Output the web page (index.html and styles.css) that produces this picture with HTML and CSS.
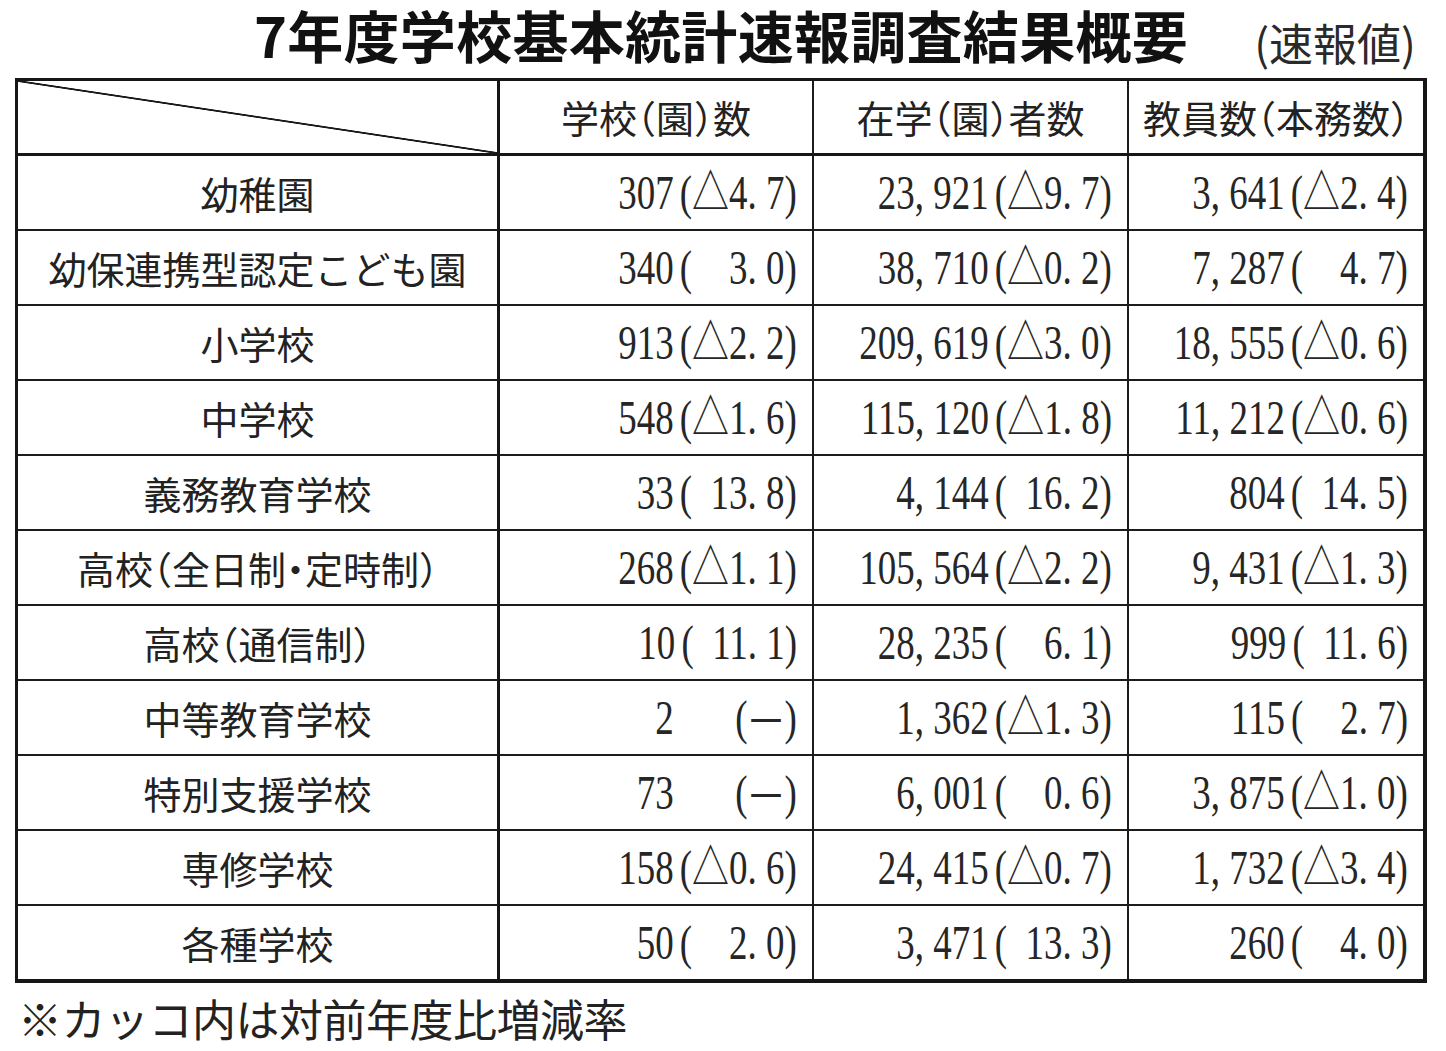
FILE: index.html
```html
<!DOCTYPE html>
<html lang="ja">
<head>
<meta charset="utf-8">
<title>7年度学校基本統計速報調査結果概要</title>
<link rel="stylesheet" href="styles.css">
</head>
<body>
<div class="page">
  <header class="head">
    <h1 class="title">7年度学校基本統計速報調査結果概要</h1>
    <div class="note">(速報値)</div>
  </header>

  <div class="tbl">
    <div class="hd diag"></div>
    <div class="hd">学校（園）数</div>
    <div class="hd">在学（園）者数</div>
    <div class="hd">教員数（本務数）</div>

    <div class="lbl">幼稚園</div>
    <div class="num"><span class="n">307<span class="o">(</span><span class="t">△</span>4<span class="d">.</span>7<span class="e">)</span></span></div>
    <div class="num"><span class="n">23<span class="c">,</span>921<span class="o">(</span><span class="t">△</span>9<span class="d">.</span>7<span class="e">)</span></span></div>
    <div class="num"><span class="n">3<span class="c">,</span>641<span class="o">(</span><span class="t">△</span>2<span class="d">.</span>4<span class="e">)</span></span></div>

    <div class="lbl">幼保連携型認定こども園</div>
    <div class="num"><span class="n">340<span class="o">(</span><span class="b2"></span>3<span class="d">.</span>0<span class="e">)</span></span></div>
    <div class="num"><span class="n">38<span class="c">,</span>710<span class="o">(</span><span class="t">△</span>0<span class="d">.</span>2<span class="e">)</span></span></div>
    <div class="num"><span class="n">7<span class="c">,</span>287<span class="o">(</span><span class="b2"></span>4<span class="d">.</span>7<span class="e">)</span></span></div>

    <div class="lbl">小学校</div>
    <div class="num"><span class="n">913<span class="o">(</span><span class="t">△</span>2<span class="d">.</span>2<span class="e">)</span></span></div>
    <div class="num"><span class="n">209<span class="c">,</span>619<span class="o">(</span><span class="t">△</span>3<span class="d">.</span>0<span class="e">)</span></span></div>
    <div class="num"><span class="n">18<span class="c">,</span>555<span class="o">(</span><span class="t">△</span>0<span class="d">.</span>6<span class="e">)</span></span></div>

    <div class="lbl">中学校</div>
    <div class="num"><span class="n">548<span class="o">(</span><span class="t">△</span>1<span class="d">.</span>6<span class="e">)</span></span></div>
    <div class="num"><span class="n">115<span class="c">,</span>120<span class="o">(</span><span class="t">△</span>1<span class="d">.</span>8<span class="e">)</span></span></div>
    <div class="num"><span class="n">11<span class="c">,</span>212<span class="o">(</span><span class="t">△</span>0<span class="d">.</span>6<span class="e">)</span></span></div>

    <div class="lbl">義務教育学校</div>
    <div class="num"><span class="n">33<span class="o">(</span><span class="b1"></span>13<span class="d">.</span>8<span class="e">)</span></span></div>
    <div class="num"><span class="n">4<span class="c">,</span>144<span class="o">(</span><span class="b1"></span>16<span class="d">.</span>2<span class="e">)</span></span></div>
    <div class="num"><span class="n">804<span class="o">(</span><span class="b1"></span>14<span class="d">.</span>5<span class="e">)</span></span></div>

    <div class="lbl">高校（全日制・定時制）</div>
    <div class="num"><span class="n">268<span class="o">(</span><span class="t">△</span>1<span class="d">.</span>1<span class="e">)</span></span></div>
    <div class="num"><span class="n">105<span class="c">,</span>564<span class="o">(</span><span class="t">△</span>2<span class="d">.</span>2<span class="e">)</span></span></div>
    <div class="num"><span class="n">9<span class="c">,</span>431<span class="o">(</span><span class="t">△</span>1<span class="d">.</span>3<span class="e">)</span></span></div>

    <div class="lbl">高校（通信制）</div>
    <div class="num"><span class="n">10<span class="o">(</span><span class="b1"></span>11<span class="d">.</span>1<span class="e">)</span></span></div>
    <div class="num"><span class="n">28<span class="c">,</span>235<span class="o">(</span><span class="b2"></span>6<span class="d">.</span>1<span class="e">)</span></span></div>
    <div class="num"><span class="n">999<span class="o">(</span><span class="b1"></span>11<span class="d">.</span>6<span class="e">)</span></span></div>

    <div class="lbl">中等教育学校</div>
    <div class="num"><span class="n">2<span class="b3"></span><span class="o">(</span><span class="m">—</span><span class="e">)</span></span></div>
    <div class="num"><span class="n">1<span class="c">,</span>362<span class="o">(</span><span class="t">△</span>1<span class="d">.</span>3<span class="e">)</span></span></div>
    <div class="num"><span class="n">115<span class="o">(</span><span class="b2"></span>2<span class="d">.</span>7<span class="e">)</span></span></div>

    <div class="lbl">特別支援学校</div>
    <div class="num"><span class="n">73<span class="b3"></span><span class="o">(</span><span class="m">—</span><span class="e">)</span></span></div>
    <div class="num"><span class="n">6<span class="c">,</span>001<span class="o">(</span><span class="b2"></span>0<span class="d">.</span>6<span class="e">)</span></span></div>
    <div class="num"><span class="n">3<span class="c">,</span>875<span class="o">(</span><span class="t">△</span>1<span class="d">.</span>0<span class="e">)</span></span></div>

    <div class="lbl">専修学校</div>
    <div class="num"><span class="n">158<span class="o">(</span><span class="t">△</span>0<span class="d">.</span>6<span class="e">)</span></span></div>
    <div class="num"><span class="n">24<span class="c">,</span>415<span class="o">(</span><span class="t">△</span>0<span class="d">.</span>7<span class="e">)</span></span></div>
    <div class="num"><span class="n">1<span class="c">,</span>732<span class="o">(</span><span class="t">△</span>3<span class="d">.</span>4<span class="e">)</span></span></div>

    <div class="lbl">各種学校</div>
    <div class="num"><span class="n">50<span class="o">(</span><span class="b2"></span>2<span class="d">.</span>0<span class="e">)</span></span></div>
    <div class="num"><span class="n">3<span class="c">,</span>471<span class="o">(</span><span class="b1"></span>13<span class="d">.</span>3<span class="e">)</span></span></div>
    <div class="num"><span class="n">260<span class="o">(</span><span class="b2"></span>4<span class="d">.</span>0<span class="e">)</span></span></div>
  </div>

  <p class="foot">※カッコ内は対前年度比増減率</p>
</div>
</body>
</html>
```

FILE: styles.css
```css
* { box-sizing: border-box; }

html, body {
  margin: 0;
  padding: 0;
  background: #ffffff;
}

body {
  font-family: "Noto Sans CJK JP", "Noto Sans", sans-serif;
  color: #1e1e1e;
}

.page {
  padding-left: 15px;
  width: 1427px;
}

/* ---------- heading ---------- */
.head {
  display: grid;
  grid-template-columns: 1fr auto 1fr;
  align-items: start;
  height: 78px;
  width: 1412px;
}

.title {
  grid-column: 2;
  margin: 0;
  padding-top: 4px;
  font-size: 56px;
  line-height: 60px;
  font-weight: 700;
  color: #111111;
  letter-spacing: 0.3px;
  white-space: nowrap;
}

.note {
  grid-column: 3;
  justify-self: end;
  padding-right: 11px;
  padding-top: 19px;
  font-size: 44px;
  line-height: 46px;
  color: #2a2a2a;
  white-space: nowrap;
}

/* ---------- table ---------- */
.tbl {
  display: grid;
  grid-template-columns: 482px 314px 315px 294px;
  grid-template-rows: 75px repeat(10, 75px) 73px;
  width: 1412px;
  border-style: solid;
  border-color: #161616;
  border-width: 3px 4px 4px 3px;
}

.tbl > div {
  border-right: 2px solid #1c1c1c;
  border-bottom: 2px solid #1c1c1c;
}

.tbl > div:nth-child(4n+1) { border-right-width: 3px; border-right-color: #161616; }
.tbl > div:nth-child(4n) { border-right: 0; }
.tbl > div:nth-child(-n+4) { border-bottom-width: 3px; border-bottom-color: #161616; }
.tbl > div:nth-last-child(-n+4) { border-bottom: 0; }

.hd,
.lbl {
  display: flex;
  align-items: center;
  justify-content: center;
  font-size: 38px;
  font-weight: 400;
  font-feature-settings: "halt";
  color: #222222;
  white-space: nowrap;
}

.hd { padding-bottom: 1px; }

.diag {
  background: linear-gradient(to top right,
    transparent calc(50% - 1.3px),
    #1a1a1a calc(50% - 0.6px),
    #1a1a1a calc(50% + 0.6px),
    transparent calc(50% + 1.3px));
}

.num {
  display: flex;
  align-items: center;
  justify-content: flex-end;
  padding-right: 9px;
}

.n {
  display: inline-block;
  font-family: "Liberation Serif", "Times New Roman", serif;
  font-size: 48px;
  line-height: 48px;
  color: #262626;
  white-space: nowrap;
  transform: scaleX(0.77);
  transform-origin: 100% 50%;
}

.n > span { display: inline-block; }

.o { width: 24px; text-align: right; }
.e { width: 24px; text-align: left; }
.c, .d { width: 24px; text-align: left; }
.b1 { width: 24px; }
.b2 { width: 48px; }
.b3 { width: 72px; }

.t, .m {
  width: 48px;
  text-align: center;
  font-family: "Noto Sans CJK JP", "DejaVu Sans", sans-serif;
  font-size: 48px;
  line-height: 0;
  font-weight: 400;
}

/* ---------- footnote ---------- */
.foot {
  margin: 12px 0 0 0;
  padding-left: 3px;
  font-size: 44px;
  line-height: 46px;
  letter-spacing: -0.5px;
  color: #222222;
  white-space: nowrap;
}
```
